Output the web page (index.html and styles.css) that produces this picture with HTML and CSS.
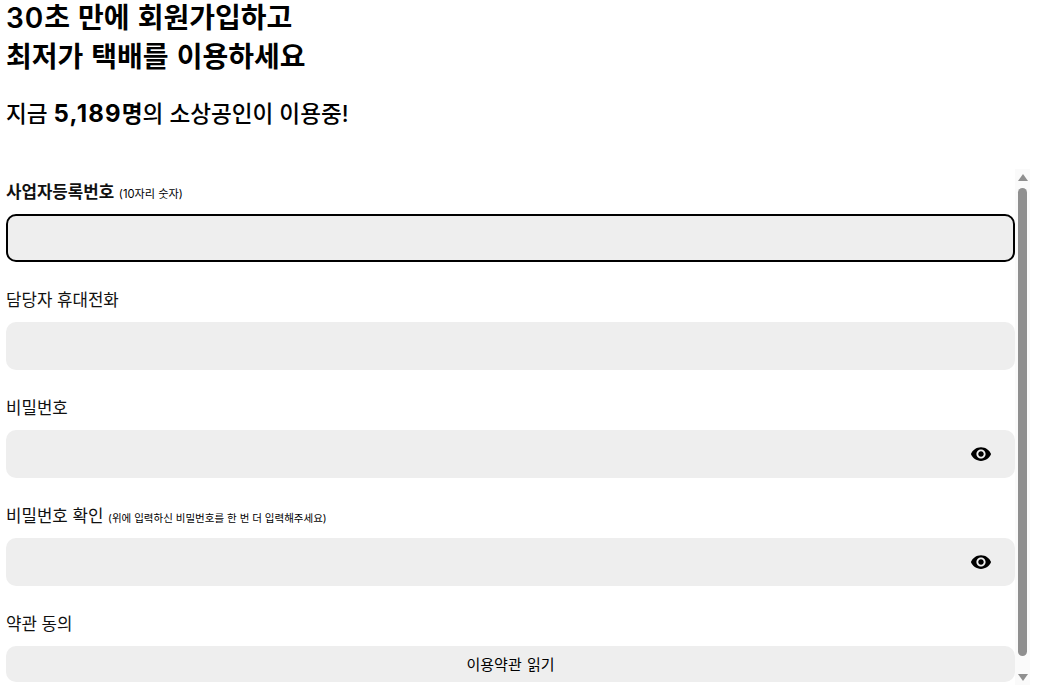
FILE: index.html
```html
<!DOCTYPE html>
<html lang="ko">

<head>
    <meta charset="UTF-8">
    <meta name="viewport" content="width=device-width, initial-scale=1.0">
    <title>회원가입</title>
    <link rel="stylesheet" href="styles.css">
</head>

<body>
    <div class="container">
        <h1 class="title"><span class="num">30</span>초 만에 회원가입하고<br>최저가 택배를 이용하세요</h1>
        <h2 class="subtitle">지금 <b><span class="count">5,189</span>명</b>의 소상공인이 이용중!</h2>
        <div class="scroll-box">
            <form class="signup">
                <div class="field">
                    <label class="label"><b>사업자등록번호</b> <small class="short">(10자리 숫자)</small></label>
                    <div class="input focus"></div>
                </div>
                <div class="field">
                    <label class="label">담당자 휴대전화</label>
                    <div class="input"></div>
                </div>
                <div class="field">
                    <label class="label">비밀번호</label>
                    <div class="input">
                        <svg class="eye" viewBox="0 0 24 24"><path d="M12 4.5C7 4.5 2.73 7.61 1 12c1.73 4.39 6 7.5 11 7.5s9.27-3.11 11-7.5c-1.73-4.39-6-7.5-11-7.5zM12 17c-2.76 0-5-2.24-5-5s2.24-5 5-5 5 2.24 5 5-2.24 5-5 5zm0-8c-1.66 0-3 1.34-3 3s1.34 3 3 3 3-1.34 3-3-1.34-3-3-3z"/></svg>
                    </div>
                </div>
                <div class="field">
                    <label class="label">비밀번호 확인 <small>(위에 입력하신 비밀번호를 한 번 더 입력해주세요)</small></label>
                    <div class="input">
                        <svg class="eye" viewBox="0 0 24 24"><path d="M12 4.5C7 4.5 2.73 7.61 1 12c1.73 4.39 6 7.5 11 7.5s9.27-3.11 11-7.5c-1.73-4.39-6-7.5-11-7.5zM12 17c-2.76 0-5-2.24-5-5s2.24-5 5-5 5 2.24 5 5-2.24 5-5 5zm0-8c-1.66 0-3 1.34-3 3s1.34 3 3 3 3-1.34 3-3-1.34-3-3-3z"/></svg>
                    </div>
                </div>
                <div class="field">
                    <label class="label">약관 동의</label>
                    <div class="terms">이용약관 읽기</div>
                </div>
            </form>
            <div class="scrollbar">
                <div class="arrow up"></div>
                <div class="thumb"></div>
                <div class="arrow down"></div>
            </div>
        </div>
    </div>
</body>

</html>
```

FILE: styles.css
```css
* {
    margin: 0;
    padding: 0;
    box-sizing: border-box;
}

body {
    font-family: Inter, "Noto Sans CJK KR", sans-serif;
    color: #000;
    background: #fff;
    overflow: hidden;
}

.container {
    display: flex;
    flex-direction: column;
    width: 1030px;
    height: 691px;
    padding-left: 6px;
}

.title {
    font-size: 28px;
    font-weight: 600;
    line-height: 39px;
    margin-top: -1px;
    word-spacing: 1px;
}

.num {
    letter-spacing: 1px;
}

.subtitle {
    font-size: 22.6px;
    font-weight: 500;
    line-height: 30px;
    margin-top: 22px;
}

.subtitle b {
    font-weight: 700;
}

.count {
    font-size: 24px;
    letter-spacing: 1.2px;
}

.scroll-box {
    display: flex;
    height: 516px;
    margin-top: 40px;
}

.signup {
    flex: 1;
    padding-top: 10px;
    overflow: hidden;
}

.field {
    display: flex;
    flex-direction: column;
    margin-bottom: 25px;
}

.label {
    font-size: 16.8px;
    line-height: 26px;
    margin-bottom: 9px;
    color: #111;
}

.label b {
    font-weight: 600;
}

.label small {
    font-size: 10.5px;
    line-height: 1;
    color: #000;
}

.label small.short {
    font-size: 11.2px;
}

.input {
    display: flex;
    align-items: center;
    justify-content: flex-end;
    height: 48px;
    background: #eee;
    border-radius: 10px;
    padding-right: 23px;
}

.input.focus {
    border: 2px solid #000;
}

.eye {
    width: 22px;
    height: 22px;
}

.terms {
    height: 36px;
    background: #eee;
    border-radius: 10px;
    font-size: 15px;
    line-height: 37px;
    word-spacing: 1px;
    text-align: center;
}

.scrollbar {
    display: flex;
    flex-direction: column;
    align-items: center;
    width: 15px;
    background: #fafafa;
    padding: 5px 0 4px;
}

.thumb {
    width: 9px;
    height: 469px;
    margin: 7px 0 18px;
    background: #8f8f8f;
    border-radius: 5px;
}

.arrow {
    width: 0;
    height: 0;
    border-left: 5px solid transparent;
    border-right: 5px solid transparent;
}

.arrow.up {
    border-bottom: 7px solid #8f8f8f;
}

.arrow.down {
    border-top: 7px solid #8f8f8f;
}
```
